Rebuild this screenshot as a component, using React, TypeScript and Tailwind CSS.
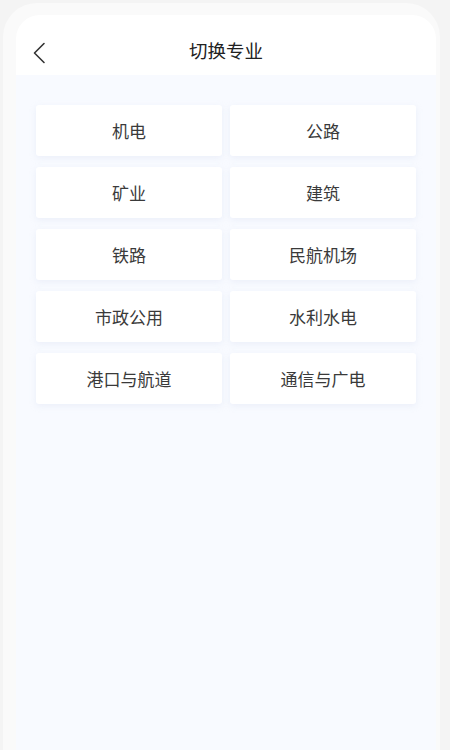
const majors = [
  '机电',
  '公路',
  '矿业',
  '建筑',
  '铁路',
  '民航机场',
  '市政公用',
  '水利水电',
  '港口与航道',
  '通信与广电',
]

export default function App() {
  return (
    <div
      className="h-[750px] w-[450px] overflow-hidden bg-[#f4f4f4] pl-[3px] pr-[10px] pt-[3px]"
      style={{ fontFamily: '"Noto Sans CJK SC", "Noto Sans", sans-serif' }}
    >
      <div className="h-full rounded-t-[34px] bg-[#fafafa] pl-[13px] pr-[4px] pt-3">
        <div className="flex h-full flex-col overflow-hidden rounded-t-[24px] bg-white">
          {/* Header */}
          <div className="relative flex h-[60px] shrink-0 items-center justify-center pt-3">
            <button className="absolute left-[11px] top-[26px] flex h-[24px] w-[24px] items-center justify-center text-[#333]">
              <svg width="14" height="22" viewBox="0 0 14 22" fill="none">
                <path d="M12 1.5L2.5 11L12 20.5" stroke="currentColor" strokeWidth="1.6" strokeLinecap="round" strokeLinejoin="round" />
              </svg>
            </button>
            <h1 className="text-[18.5px] font-normal text-[#222]">切换专业</h1>
          </div>

          {/* Majors grid */}
          <div className="flex-1 bg-[#f8faff] px-5 pt-[30px]">
            <div className="grid grid-cols-2 gap-x-2 gap-y-[11px]">
              {majors.map((m) => (
                <div
                  key={m}
                  className="flex h-[51px] items-center justify-center rounded-[3px] bg-white text-[17px] text-[#3a3a3a] shadow-[0_2px_6px_rgba(200,210,230,0.25)]"
                >
                  {m}
                </div>
              ))}
            </div>
          </div>
        </div>
      </div>
    </div>
  )
}
